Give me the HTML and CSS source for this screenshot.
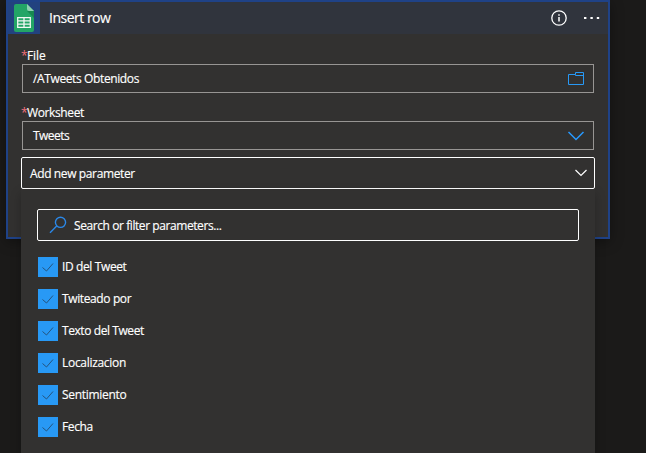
FILE: index.html
```html
<!DOCTYPE html>
<html lang="es">
<head>
<meta charset="utf-8">
<title>Insert row</title>
<link rel="stylesheet" href="styles.css">
</head>
<body>
<main class="card">
  <header class="card-header">
    <div class="brand">
      <svg width="32" height="32" viewBox="0 0 32 32">
        <path fill="#23a566" d="M8 2h11l7 7v19a2 2 0 0 1-2 2H8a2 2 0 0 1-2-2V4a2 2 0 0 1 2-2z"/>
        <path fill="#178850" d="M19 9h7v7z"/>
        <path fill="#8ed1b1" d="M19 2l7 7h-5a2 2 0 0 1-2-2z"/>
        <path fill="none" stroke="#f1f8f4" stroke-width="1.3" d="M9.7 15.6h12.6v9.8H9.7zM9.7 18.8h12.6M9.7 22.1h12.6M16 15.6v9.8"/>
      </svg>
    </div>
    <h1 class="title">Insert row</h1>
    <svg class="info" width="16" height="16" viewBox="0 0 16 16" fill="none" stroke="#fff">
      <circle cx="8" cy="8" r="7.2" stroke-width="1.3"/>
      <path stroke-width="1.5" d="M8 7v4.6M8 4.2v1.5"/>
    </svg>
    <svg class="more" width="16" height="4" viewBox="0 0 16 4" fill="#fff">
      <path d="M0 1h2.4v2H0zM6.4 1h2.4v2H6.4zM12.8 1h2.4v2h-2.4z"/>
    </svg>
  </header>
  <div class="form">
    <div class="label"><span class="star">*</span><span class="t-file">File</span></div>
    <div class="field">
      <span>/ATweets Obtenidos</span>
      <svg width="18" height="14" viewBox="0 0 18 14" fill="none" stroke="#2899f5">
        <path d="M1.500 2.500h7v-2h8v12h-15zM8.500 2.500v1h8"/>
      </svg>
    </div>
    <div class="label second"><span class="star">*</span><span>Worksheet</span></div>
    <div class="field">
      <span class="t-tweets">Tweets</span>
      <svg width="18" height="10" viewBox="0 0 18 10" fill="none" stroke="#2899ff" stroke-width="1.5"><path d="M1.500 1L9 8.500 16.500 1"/></svg>
    </div>
    <div class="combo">
      <span class="lowered">Add new parameter</span>
      <svg width="14" height="8" viewBox="0 0 14 8" fill="none" stroke="#fff" stroke-width="1.2"><path d="M1.500 1L7 6.500 12.500 1"/></svg>
      <section class="panel">
        <div class="search">
          <svg width="18" height="18" viewBox="0 0 18 18" fill="none" stroke="#2b88e8" stroke-width="1.4"><circle cx="11.500" cy="6.300" r="5.100"/><path d="M7.700 10L1 16.700"/></svg>
          <span class="lowered t-search">Search or filter parameters...</span>
        </div>
        <ul class="options">
          <li><i class="check"><svg viewBox="0 0 20 20"><path d="M4.500 10.500l4 3.500L15 6.500"/></svg></i><span>ID del Tweet</span></li>
          <li><i class="check"><svg viewBox="0 0 20 20"><path d="M4.500 10.500l4 3.500L15 6.500"/></svg></i><span>Twiteado por</span></li>
          <li><i class="check"><svg viewBox="0 0 20 20"><path d="M4.500 10.500l4 3.500L15 6.500"/></svg></i><span class="t-texto">Texto del Tweet</span></li>
          <li><i class="check"><svg viewBox="0 0 20 20"><path d="M4.500 10.500l4 3.500L15 6.500"/></svg></i><span class="t-loose">Localizacion</span></li>
          <li><i class="check"><svg viewBox="0 0 20 20"><path d="M4.500 10.500l4 3.500L15 6.500"/></svg></i><span class="t-loose">Sentimiento</span></li>
          <li><i class="check"><svg viewBox="0 0 20 20"><path d="M4.500 10.500l4 3.500L15 6.500"/></svg></i><span>Fecha</span></li>
        </ul>
      </section>
    </div>
  </div>
</main>
</body>
</html>
```
FILE: styles.css
```css
* { box-sizing: border-box; }
body {
  margin: 0;
  height: 453px;
  overflow: hidden;
  background: #1b1a19;
  color: #fff;
  font: 12px/16px "Open Sans", "Noto Sans", sans-serif;
}
svg { display: block; flex: none; }
span { white-space: nowrap; letter-spacing: -.38px; -webkit-text-stroke: .15px #fff; }
.card {
  width: 604px;
  height: 239px;
  margin-left: 6px;
  border: 2px solid #1f4287;
  background: #323130;
  box-shadow: 0 3px 12px rgba(0, 0, 0, .35);
}
.card-header {
  display: flex;
  align-items: center;
  height: 32px;
  padding-right: 8px;
  background: #30343d;
}
.brand { width: 32px; height: 32px; background: #22427f; }
.title {
  flex: 1;
  margin: 0 0 0 9px;
  font-size: 14px;
  font-weight: 400;
  line-height: 20px;
  letter-spacing: -.5px;
  -webkit-text-stroke: .15px #fff;
}
.info { margin-right: 17px; }
.form { padding: 13px 13px 0; }
.label { display: flex; height: 17px; line-height: 17px; }
.second { margin-top: 11px; }
.star { width: 6px; color: #f1707b; font-size: 12px; -webkit-text-stroke: 0; }
.t-file { letter-spacing: -.1px; }
.t-tweets { letter-spacing: -.55px; }
.t-search { letter-spacing: -.42px; }
.t-texto { letter-spacing: -.42px; }
.t-loose { letter-spacing: -.3px; }
.lowered { padding-top: 2px; }
.field {
  display: flex;
  align-items: center;
  justify-content: space-between;
  height: 29px;
  margin: 0 1px;
  padding: 0 8px 0 10px;
  border: 1px solid #979593;
}
.combo {
  position: relative;
  display: flex;
  align-items: center;
  justify-content: space-between;
  height: 32px;
  margin-top: 7px;
  padding: 0 6px 0 8px;
  border: 1px solid #fff;
  border-radius: 2px;
}
.panel {
  position: absolute;
  top: 31px;
  left: -1px;
  width: 574px;
  height: 264px;
  padding: 20px 16px;
  background: #323130;
  box-shadow: 0 5px 10px rgba(0, 0, 0, .25);
}
.search {
  display: flex;
  align-items: center;
  gap: 7px;
  height: 32px;
  padding-left: 11px;
  border: 1px solid #fff;
  border-radius: 2px;
}
.options {
  display: grid;
  gap: 12px;
  margin: 16px 0 0 1px;
  padding: 0;
  list-style: none;
}
.options li { display: flex; align-items: center; gap: 4px; height: 20px; }
.check { width: 20px; height: 20px; background: #2899f5; }
.check path { fill: none; stroke: #24547f; stroke-width: 1; }
```
